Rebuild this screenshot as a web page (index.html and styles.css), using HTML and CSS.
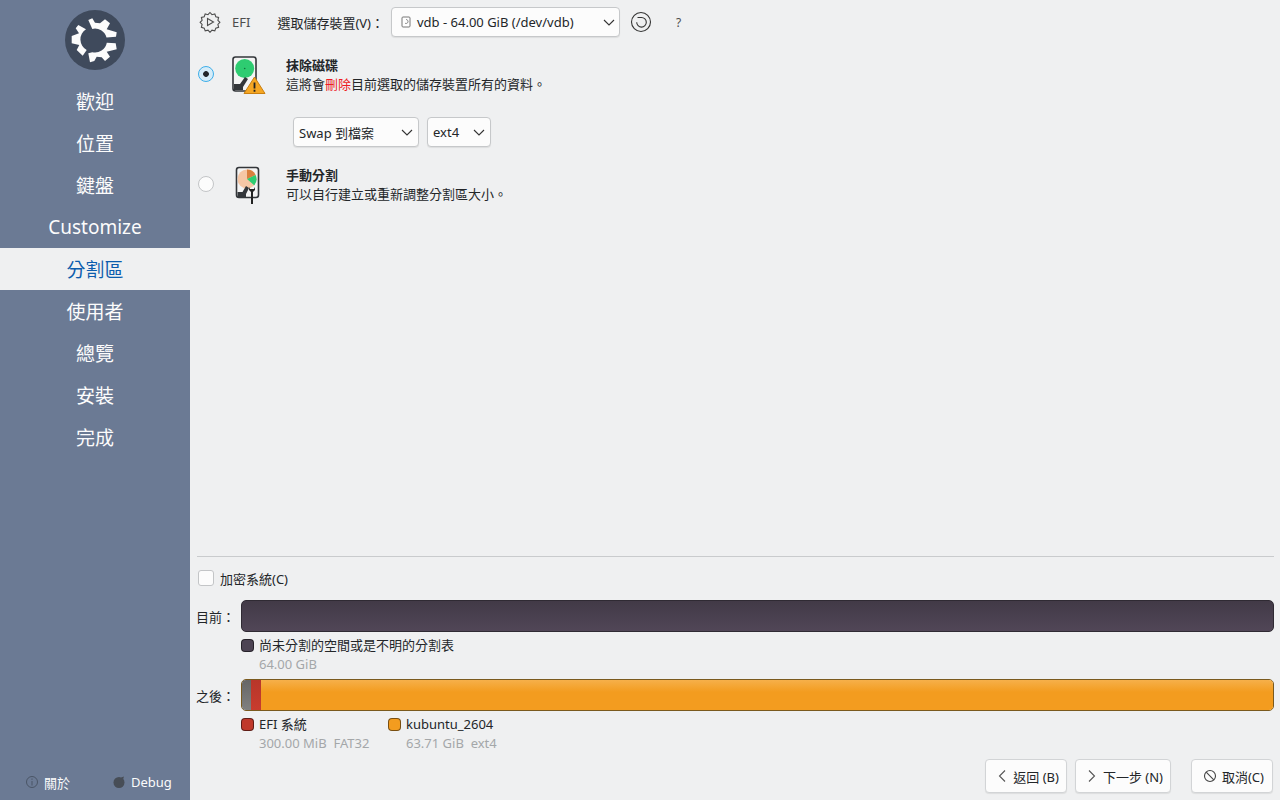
FILE: index.html
```html
<!DOCTYPE html>
<html lang="zh-TW">
<head>
  <meta charset="UTF-8">
  <title>Calamares</title>
  <link rel="stylesheet" href="styles.css">
</head>
<body>
  <div class="app">

    <!-- SIDEBAR -->
    <div class="sidebar">
      <div class="logo">
        <svg width="60" height="60" viewBox="0 0 60 60">
          <circle cx="30" cy="30" r="30" fill="#3f4a5c"/>
          <path d="M23.300 10L27.300 8.300 30 12.700 35 13.300 40 9.300 45 13.300 41.700 19.300 51.700 22.300 51 26.700 41.500 27.500A12 12 0 0 0 27.300 18.900z" fill="#fcfcfc"/>
          <path d="M23.300 43.300L25 52.300 29.300 51 31.700 46.700 36.700 47.300 40 51 45 46.700 41.700 41.700 51.700 39.300 50.700 33.300 41.800 32.700A12 12 0 0 1 27.300 42.200z" fill="#fcfcfc"/>
          <path d="M13.300 15L21 19.300A12 12 0 0 0 21.700 40L17.700 45.700 11.700 40 14.300 35 6.700 33.300 6.700 26 14 23.300 10.700 18.300z" fill="#fcfcfc"/>
        </svg>
      </div>
      <div class="nav">
        <div class="nav-item">歡迎</div>
        <div class="nav-item">位置</div>
        <div class="nav-item">鍵盤</div>
        <div class="nav-item latin">Customize</div>
        <div class="nav-item active">分割區</div>
        <div class="nav-item">使用者</div>
        <div class="nav-item">總覽</div>
        <div class="nav-item">安裝</div>
        <div class="nav-item">完成</div>
      </div>
      <div class="side-foot">
        <span class="foot-item">
          <svg width="14" height="14" viewBox="0 0 14 14"><circle cx="7" cy="7" r="5.500" fill="none" stroke="#4a5566"/><path d="M7 6v4.500M7 3.500v1.300" stroke="#4a5566"/></svg>
          關於
        </span>
        <span class="foot-item">
          <svg width="14" height="14" viewBox="0 0 14 14"><circle cx="7" cy="7.500" r="5.500" fill="#474d56"/><path d="M9 2.500l3-1-1 3z" fill="#474d56"/></svg>
          Debug
        </span>
      </div>
    </div>

    <!-- MAIN -->
    <div class="main">
      <div class="top-row">
        <svg class="efi-icon" width="22" height="22" viewBox="0 0 22 22">
          <path d="M11 1.500l2 2.200 2.800-.8 1 2.800 2.800.8-.7 2.800 2 2-2 2.200.7 2.800-2.800.8-1 2.800-2.800-.8-2 2.200-2-2.200-2.800.8-1-2.800-2.800-.8.700-2.800-2-2.200 2-2-.7-2.800 2.800-.8 1-2.800 2.800.8z" fill="none" stroke="#4d4d4d" stroke-width="1.100"/>
          <path d="M8.500 7.500l6 3.500-6 3.500z" fill="none" stroke="#4d4d4d" stroke-width="1.100"/>
        </svg>
        <span class="efi-label">EFI</span>
        <span class="device-label">選取儲存裝置(V)：</span>
        <div class="combo device-combo">
          <svg width="10" height="12" viewBox="0 0 10 12"><rect x="1" y="1" width="8" height="10" rx="1" fill="#fff" stroke="#777"/><path d="M5 3.500a2 2 0 1 1-1 3.700" fill="none" stroke="#888"/></svg>
          <span class="combo-text">vdb - 64.00 GiB (/dev/vdb)</span>
          <svg class="chev" width="12" height="7" viewBox="0 0 12 7"><path d="M1 1l5 5 5-5" fill="none" stroke="#333" stroke-width="1.100"/></svg>
        </div>
        <svg class="revert" width="22" height="22" viewBox="0 0 22 22">
          <circle cx="11" cy="11" r="9.500" fill="none" stroke="#333" stroke-width="1.100"/>
          <path d="M7.500 6.500h4a4.800 4.800 0 1 1-4.800 4.800" fill="none" stroke="#333" stroke-width="1.100"/>
        </svg>
        <span class="help">?</span>
      </div>

      <div class="option first">
        <span class="radio checked"></span>
        <svg class="disk" width="36" height="40" viewBox="0 0 36 40">
          <rect x="2" y="1" width="23" height="34" rx="2.500" fill="#f4f4f4" stroke="#33363a" stroke-width="1.600"/>
          <circle cx="13.700" cy="12.500" r="9.500" fill="#2ecc71"/>
          <circle cx="13.700" cy="12.500" r=".8" fill="#15713c"/>
          <path d="M3 28h6l5-7 3 2-5 8v3H3z" fill="#33363a"/>
          <path d="M23.500 21l10.500 16.500h-21z" fill="#f5a623" stroke="#c97f10"/>
          <path d="M23.500 26.500v6M23.500 33.800v2" stroke="#222" stroke-width="1.800"/>
        </svg>
        <div class="option-text">
          <div class="option-title">抹除磁碟</div>
          <div>這將會<span class="danger">刪除</span>目前選取的儲存裝置所有的資料。</div>
        </div>
      </div>

      <div class="swap-row">
        <div class="combo swap-combo">
          <span class="combo-text">Swap 到檔案</span>
          <svg class="chev" width="12" height="7" viewBox="0 0 12 7"><path d="M1 1l5 5 5-5" fill="none" stroke="#333" stroke-width="1.100"/></svg>
        </div>
        <div class="combo fs-combo">
          <span class="combo-text">ext4</span>
          <svg class="chev" width="12" height="7" viewBox="0 0 12 7"><path d="M1 1l5 5 5-5" fill="none" stroke="#333" stroke-width="1.100"/></svg>
        </div>
      </div>

      <div class="option second">
        <span class="radio"></span>
        <svg class="disk" width="36" height="40" viewBox="0 0 36 40">
          <rect x="5.500" y="1.500" width="22" height="30" rx="2.500" fill="#f4f4f4" stroke="#33363a" stroke-width="1.600"/>
          <circle cx="16" cy="13" r="9.500" fill="#f6c7a6"/>
          <path d="M16 13V3.500a9.500 9.500 0 0 1 8.600 5.400z" fill="#d9803f"/>
          <path d="M16 13l8.600-4.100a9.500 9.500 0 0 1-1.400 10.300z" fill="#2ecc71"/>
          <path d="M6.500 26h5l3.500-6 3 2-3 6v3H6.500z" fill="#33363a"/>
          <path d="M18 21v3l2 2v12h2V26l2-2v-3l-1 2h-4z" fill="#222"/>
        </svg>
        <div class="option-text">
          <div class="option-title">手動分割</div>
          <div>可以自行建立或重新調整分割區大小。</div>
        </div>
      </div>

      <div class="spacer"></div>

      <div class="bottom">
        <label class="encrypt"><span class="check"></span>加密系統(C)</label>

        <div class="bar-row">
          <span class="bar-label">目前：</span>
          <div class="bar bar-current"></div>
        </div>
        <div class="legend">
          <div class="legend-item">
            <span class="swatch unalloc"></span>
            <div>
              <div>尚未分割的空間或是不明的分割表</div>
              <div class="legend-sub">64.00 GiB</div>
            </div>
          </div>
        </div>

        <div class="bar-row after">
          <span class="bar-label">之後：</span>
          <div class="bar bar-after">
            <span class="seg seg-free"></span>
            <span class="seg seg-efi"></span>
            <span class="seg seg-root"></span>
          </div>
        </div>
        <div class="legend">
          <div class="legend-item efi-item">
            <span class="swatch efi"></span>
            <div>
              <div>EFI 系統</div>
              <div class="legend-sub">300.00 MiB&nbsp; FAT32</div>
            </div>
          </div>
          <div class="legend-item">
            <span class="swatch root"></span>
            <div>
              <div>kubuntu_2604</div>
              <div class="legend-sub">63.71 GiB&nbsp; ext4</div>
            </div>
          </div>
        </div>
      </div>

      <div class="buttons">
        <div class="btn back">
          <svg width="10" height="14" viewBox="0 0 10 14"><path d="M8 1.500L2.500 7 8 12.500" fill="none" stroke="#555" stroke-width="1.100"/></svg>
          返回 (B)
        </div>
        <div class="btn next">
          <svg width="10" height="14" viewBox="0 0 10 14"><path d="M2 1.500L7.500 7 2 12.500" fill="none" stroke="#555" stroke-width="1.100"/></svg>
          下一步 (N)
        </div>
        <div class="btn cancel">
          <svg width="14" height="14" viewBox="0 0 14 14"><circle cx="7" cy="7" r="5.500" fill="none" stroke="#444" stroke-width="1.100"/><path d="M3.200 3.200l7.600 7.600" stroke="#444" stroke-width="1.100"/></svg>
          取消(C)
        </div>
      </div>
    </div>
  </div>
</body>
</html>
```
FILE: styles.css
```css
* {
  box-sizing: border-box;
}

html, body {
  margin: 0;
  height: 100%;
  overflow: hidden;
}

body {
  font-family: "Noto Sans", "Noto Sans CJK TC", sans-serif;
  font-size: 13px;
  color: #232629;
  background: #eff0f1;
}

.app {
  display: flex;
  height: 800px;
}

/* sidebar */
.sidebar {
  width: 190px;
  flex: none;
  display: flex;
  flex-direction: column;
  background: #6b7a94;
  color: #fcfcfc;
}

.logo {
  display: flex;
  justify-content: center;
  padding-top: 10px;
  height: 80px;
}

.nav {
  flex: 1;
}

.nav-item {
  height: 42px;
  line-height: 44px;
  text-align: center;
  font-size: 19px;
}

.nav-item.latin {
  line-height: 42px;
}

.nav-item.active {
  background: #eff0f1;
  color: #0b5cad;
}

.side-foot {
  display: flex;
  height: 36px;
  padding-left: 25px;
  gap: 42px;
  align-items: center;
}

.foot-item {
  display: flex;
  align-items: center;
  gap: 5px;
}

/* main */
.main {
  flex: 1;
  min-width: 0;
  display: flex;
  flex-direction: column;
  padding: 0 6px 7px 7px;
}

.top-row {
  display: flex;
  align-items: center;
  height: 44px;
  padding-left: 2px;
}

.efi-label {
  font-size: 13px;
  margin-left: 11px;
  color: #4d4d4d;
}

.device-label {
  margin-left: 27px;
}

.combo {
  display: flex;
  align-items: center;
  height: 30px;
  background: #fcfcfc;
  border: 1px solid #c6c8ca;
  border-radius: 4px;
  box-shadow: 0 1px 1px rgba(0, 0, 0, 0.08);
  padding: 0 5px;
}

.combo-text {
  flex: 1;
}

.device-combo {
  width: 229px;
  margin-left: 7px;
  padding-left: 9px;
  padding-right: 4px;
}

.device-combo .combo-text {
  margin-left: 6px;
}

.revert {
  margin-left: 10px;
}

.help {
  margin-left: 24px;
  font-size: 12px;
  color: #4d4d4d;
}

.option {
  display: flex;
  align-items: flex-start;
  line-height: 19px;
}

.option.first {
  margin-top: 12px;
}

.option.second {
  margin-top: 19px;
}

.radio {
  flex: none;
  width: 16px;
  height: 16px;
  margin: 10px 0 0 1px;
  border: 1px solid #c3c5c7;
  border-radius: 50%;
  background: #fcfcfc;
}

.radio.checked {
  border-color: #3daee9;
  background: radial-gradient(circle, #232629 0 2.500px, #d6ecf8 3.200px);
}

.disk {
  flex: none;
  margin-left: 17px;
}

.option-text {
  margin-left: 19px;
}

.option-title {
  font-weight: 700;
}

.danger {
  color: #ed1c24;
}

.swap-row {
  display: flex;
  gap: 8px;
  margin: 21px 0 0 96px;
}

.swap-combo {
  width: 126px;
}

.fs-combo {
  width: 64px;
}

.spacer {
  flex: 1;
}

/* bottom part */
.bottom {
  border-top: 1px solid #c9cbcd;
  padding-top: 13px;
}

.encrypt {
  display: flex;
  align-items: center;
  gap: 6px;
  height: 16px;
}

.check {
  width: 16px;
  height: 16px;
  margin-left: 1px;
  border: 1px solid #c3c5c7;
  border-radius: 3px;
  background: #fcfcfc;
}

.bar-row {
  display: flex;
  align-items: center;
  margin-top: 14px;
}

.bar-row.after {
  margin-top: 5px;
}

.bar-label {
  width: 45px;
  margin-left: -1px;
  flex: none;
}

.bar {
  flex: 1;
  height: 32px;
  border-radius: 5px;
  display: flex;
  overflow: hidden;
}

.bar-current {
  background: linear-gradient(#423a47, #514657);
  border: 1px solid #2f2a33;
}

.bar-after {
  border: 1px solid #7a5a1e;
}

.seg {
  display: block;
}

.seg-free {
  width: 9px;
  background: linear-gradient(#666, #808080);
}

.seg-efi {
  width: 10px;
  background: linear-gradient(#b8362a, #c83c2e);
}

.seg-root {
  flex: 1;
  background: linear-gradient(#f6b04a, #f39c1f 40%);
}

.legend {
  display: flex;
  margin: 4px 0 0 44px;
  line-height: 19px;
}

.legend-item {
  display: flex;
  gap: 5px;
}

.efi-item {
  width: 147px;
}

.swatch {
  flex: none;
  width: 13px;
  height: 13px;
  margin-top: 3px;
  border-radius: 4px;
  border: 1px solid rgba(0, 0, 0, 0.5);
}

.unalloc {
  background: #4d4454;
}

.efi {
  background: #c0392b;
}

.root {
  background: #f39c1f;
}

.legend-sub {
  color: #a4a7a9;
  font-size: 13px;
}

/* buttons */
.buttons {
  display: flex;
  justify-content: flex-end;
  margin: 6px 1px 0 0;
}

.btn {
  display: flex;
  align-items: center;
  gap: 6px;
  height: 34px;
  padding: 0 7px 0 11px;
  background: #fcfcfc;
  border: 1px solid #d2d4d6;
  border-radius: 4px;
  box-shadow: 0 1px 1px rgba(0, 0, 0, 0.08);
}

.next {
  margin-left: 8px;
}

.cancel {
  margin-left: 20px;
  gap: 5px;
  padding-right: 8px;
}
```
